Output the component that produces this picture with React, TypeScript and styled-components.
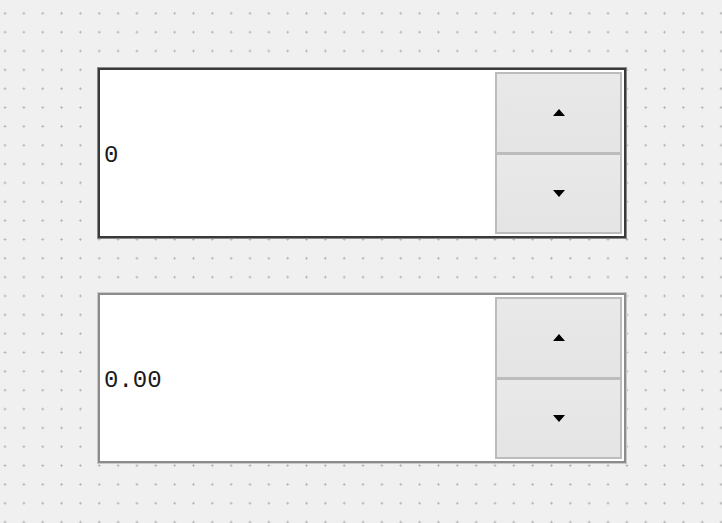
import React from "react";
import styled, { createGlobalStyle } from "styled-components";

const Global = createGlobalStyle`
  html, body {
    margin: 0;
    padding: 0;
    background: #f0f0f0;
  }
`;

const S = {
  Canvas: styled.div`
    box-sizing: border-box;
    width: 722px;
    height: 523px;
    padding: 68px 0 0 98px;
    display: flex;
    flex-direction: column;
    gap: 55px;
    background-color: #f0f0f0;
    background-image: radial-gradient(circle, #b0b0b0 0.9px, transparent 1.3px);
    background-size: 18.85px 18.85px;
    background-position: -4.4px 3.9px;
  `,
  SpinBox: styled.div<{ $focused?: boolean }>`
    box-sizing: border-box;
    width: 528px;
    height: 170px;
    display: flex;
    background: #ffffff;
    border: 2px solid ${(p) => (p.$focused ? "#3a3a3a" : "#8c8c8c")};
    outline: 1px solid ${(p) => (p.$focused ? "#8a8a8a" : "#c8c8c8")};
  `,
  Value: styled.div`
    flex: 1;
    display: flex;
    align-items: center;
    padding: 4px 0 0 4px;
    font-family: "Liberation Mono", "DejaVu Sans Mono", monospace;
    font-size: 24px;
    color: #1a1a1a;
  `,
  Buttons: styled.div`
    width: 127px;
    padding: 2px 2px 2px 0;
    display: flex;
    flex-direction: column;
  `,
  Step: styled.div`
    flex: 1;
    display: flex;
    align-items: center;
    justify-content: center;
    border: 2px solid #bcbcbc;
    background: linear-gradient(#e9e9e9, #e4e4e4);
    & + & {
      border-top-width: 1px;
    }
  `,
};

const Arrow: React.FC<{ up?: boolean }> = ({ up }) => (
  <svg width="12" height="7" viewBox="0 0 12 7">
    <path d={up ? "M0 7 L6 0 L12 7 Z" : "M0 0 L12 0 L6 7 Z"} fill="#000" />
  </svg>
);

const SpinBox: React.FC<{ value: string; focused?: boolean }> = ({ value, focused }) => (
  <S.SpinBox $focused={focused}>
    <S.Value>{value}</S.Value>
    <S.Buttons>
      <S.Step>
        <Arrow up />
      </S.Step>
      <S.Step>
        <Arrow />
      </S.Step>
    </S.Buttons>
  </S.SpinBox>
);

const App: React.FC = () => (
  <>
    <Global />
    <S.Canvas>
      <SpinBox value="0" focused />
      <SpinBox value="0.00" />
    </S.Canvas>
  </>
);

export default App;
